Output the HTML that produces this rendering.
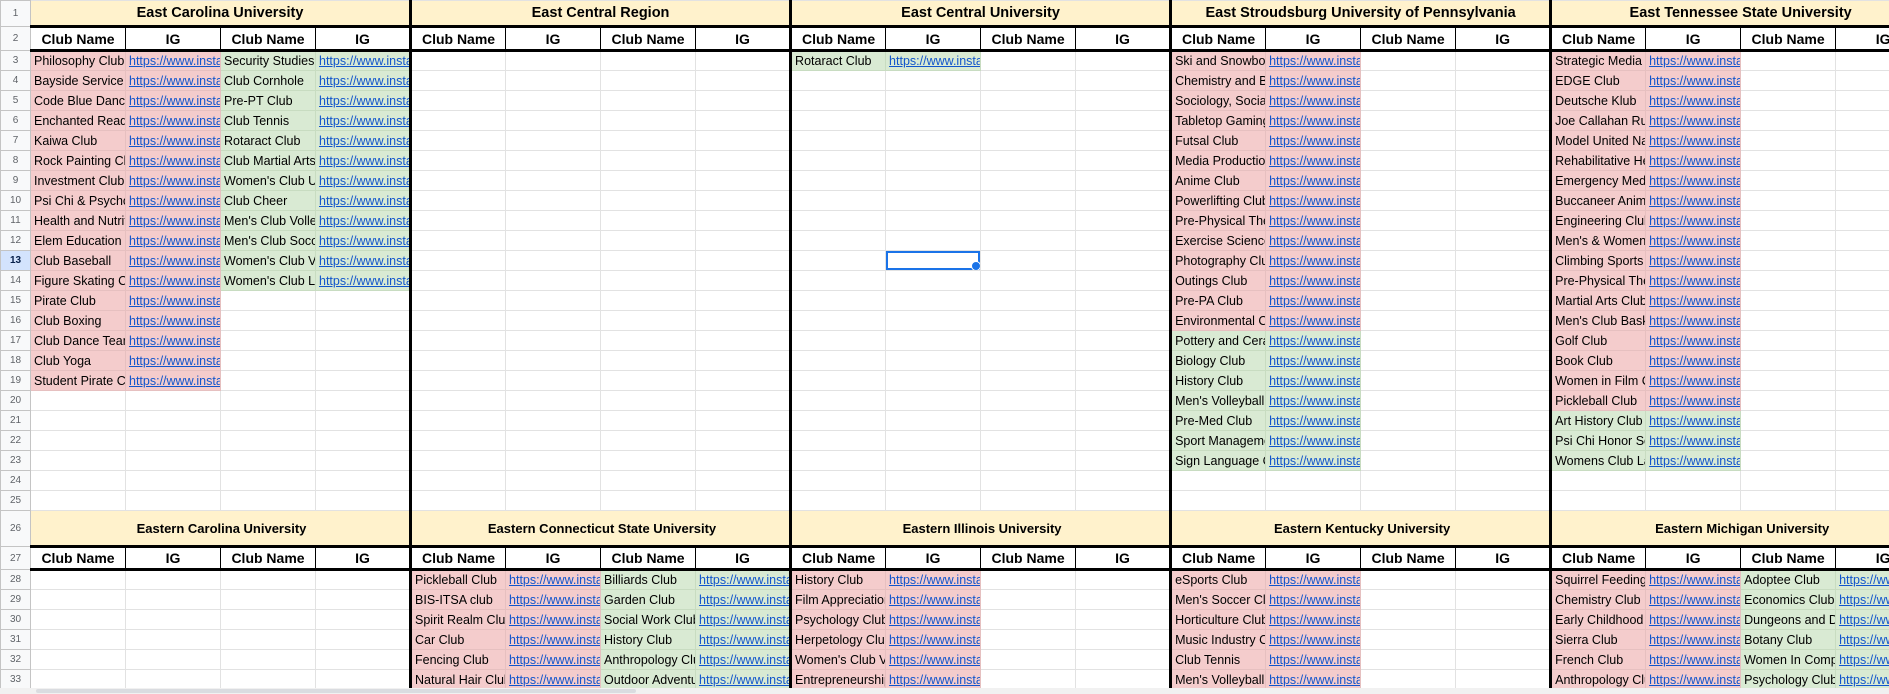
<!DOCTYPE html>
<html><head><meta charset="utf-8"><style>
html,body{margin:0;padding:0;background:#fff;width:1889px;height:694px;overflow:hidden}
table{border-collapse:collapse;table-layout:fixed;width:1930px;font-family:"Liberation Sans",Arial,sans-serif}
td{border:1px solid #e2e2e2;padding:0 0 0 3px;font-size:12.5px;white-space:nowrap;overflow:hidden;color:#000;text-overflow:clip}
th{background:#f8f9fa;color:#5f6368;font-weight:normal;font-size:10px;border:1px solid #c4c4c4;padding:0}
tr{height:20px}
td:nth-child(5),td:nth-child(9),td:nth-child(13),td:nth-child(17){border-right:3px solid #000}
.p{background:#f4cccc;border-color:#e6c0c0}
.g{background:#d9ead3;border-color:#c8dcc1}
.pl{background:#f4cccc;border-color:#e6c0c0;color:#1155cc;text-decoration:underline}
.gl{background:#d9ead3;border-color:#c8dcc1;color:#1155cc;text-decoration:underline}
tr.h1 td{background:#fff2cc;font-weight:bold;font-size:14.5px;text-align:center;border-bottom:3px solid #000;border-right:3px solid #000;vertical-align:middle;padding:0}
tr.h26 td{background:#fff2cc;font-weight:bold;font-size:13px;text-align:center;border-bottom:3px solid #000;border-right:3px solid #000;border-top:1px solid #e2e2e2}
tr.h2 td{font-weight:bold;font-size:14px;text-align:center;border-bottom:3px solid #000;border-right:1px solid #000;padding:0}
tr.h2 td:nth-child(5),tr.h2 td:nth-child(9),tr.h2 td:nth-child(13),tr.h2 td:nth-child(17){border-right:3px solid #000}
.sel{position:relative;box-shadow:inset 0 0 0 2px #1a73e8}
.dot{position:absolute;right:-1px;bottom:-1px;width:8px;height:8px;border-radius:50%;background:#1a73e8;border:1px solid #fff}
th.s{background:#d3e3fd;color:#041e49;font-weight:bold}
.sb{position:absolute;left:0;top:688px;width:1889px;height:6px;background:#f1f1f1}
.sb div{position:absolute;left:36px;top:1px;width:600px;height:4px;background:#dadce0;border-radius:2px}
</style></head><body>
<table>
<colgroup><col style="width:30px"><col span="20" style="width:95px"></colgroup>
<tr class="h1" style="height:26px"><th>1</th><td colspan="4">East Carolina University</td><td colspan="4">East Central Region</td><td colspan="4">East Central University</td><td colspan="4">East Stroudsburg University of Pennsylvania</td><td colspan="4">East Tennessee State University</td></tr>
<tr class="h2" style="height:24px"><th>2</th><td>Club Name</td><td>IG</td><td>Club Name</td><td>IG</td><td>Club Name</td><td>IG</td><td>Club Name</td><td>IG</td><td>Club Name</td><td>IG</td><td>Club Name</td><td>IG</td><td>Club Name</td><td>IG</td><td>Club Name</td><td>IG</td><td>Club Name</td><td>IG</td><td>Club Name</td><td>IG</td></tr>
<tr><th>3</th><td class="p">Philosophy Club</td><td class="pl">https://www.instagram.com/</td><td class="g">Security Studies</td><td class="gl">https://www.instagram.com/</td><td></td><td></td><td></td><td></td><td class="g">Rotaract Club</td><td class="gl">https://www.instagram.com/</td><td></td><td></td><td class="p">Ski and Snowboard</td><td class="pl">https://www.instagram.com/</td><td></td><td></td><td class="p">Strategic Media Club</td><td class="pl">https://www.instagram.com/</td><td></td><td></td></tr>
<tr><th>4</th><td class="p">Bayside Service</td><td class="pl">https://www.instagram.com/</td><td class="g">Club Cornhole</td><td class="gl">https://www.instagram.com/</td><td></td><td></td><td></td><td></td><td></td><td></td><td></td><td></td><td class="p">Chemistry and Biochem</td><td class="pl">https://www.instagram.com/</td><td></td><td></td><td class="p">EDGE Club</td><td class="pl">https://www.instagram.com/</td><td></td><td></td></tr>
<tr><th>5</th><td class="p">Code Blue Dance</td><td class="pl">https://www.instagram.com/</td><td class="g">Pre-PT Club</td><td class="gl">https://www.instagram.com/</td><td></td><td></td><td></td><td></td><td></td><td></td><td></td><td></td><td class="p">Sociology, Social Work</td><td class="pl">https://www.instagram.com/</td><td></td><td></td><td class="p">Deutsche Klub</td><td class="pl">https://www.instagram.com/</td><td></td><td></td></tr>
<tr><th>6</th><td class="p">Enchanted Reading</td><td class="pl">https://www.instagram.com/</td><td class="g">Club Tennis</td><td class="gl">https://www.instagram.com/</td><td></td><td></td><td></td><td></td><td></td><td></td><td></td><td></td><td class="p">Tabletop Gaming</td><td class="pl">https://www.instagram.com/</td><td></td><td></td><td class="p">Joe Callahan Running</td><td class="pl">https://www.instagram.com/</td><td></td><td></td></tr>
<tr><th>7</th><td class="p">Kaiwa Club</td><td class="pl">https://www.instagram.com/</td><td class="g">Rotaract Club</td><td class="gl">https://www.instagram.com/</td><td></td><td></td><td></td><td></td><td></td><td></td><td></td><td></td><td class="p">Futsal Club</td><td class="pl">https://www.instagram.com/</td><td></td><td></td><td class="p">Model United Nations</td><td class="pl">https://www.instagram.com/</td><td></td><td></td></tr>
<tr><th>8</th><td class="p">Rock Painting Club</td><td class="pl">https://www.instagram.com/</td><td class="g">Club Martial Arts</td><td class="gl">https://www.instagram.com/</td><td></td><td></td><td></td><td></td><td></td><td></td><td></td><td></td><td class="p">Media Production</td><td class="pl">https://www.instagram.com/</td><td></td><td></td><td class="p">Rehabilitative Health</td><td class="pl">https://www.instagram.com/</td><td></td><td></td></tr>
<tr><th>9</th><td class="p">Investment Club</td><td class="pl">https://www.instagram.com/</td><td class="g">Women's Club Ultimate</td><td class="gl">https://www.instagram.com/</td><td></td><td></td><td></td><td></td><td></td><td></td><td></td><td></td><td class="p">Anime Club</td><td class="pl">https://www.instagram.com/</td><td></td><td></td><td class="p">Emergency Medicine</td><td class="pl">https://www.instagram.com/</td><td></td><td></td></tr>
<tr><th>10</th><td class="p">Psi Chi &amp; Psychology</td><td class="pl">https://www.instagram.com/</td><td class="g">Club Cheer</td><td class="gl">https://www.instagram.com/</td><td></td><td></td><td></td><td></td><td></td><td></td><td></td><td></td><td class="p">Powerlifting Club</td><td class="pl">https://www.instagram.com/</td><td></td><td></td><td class="p">Buccaneer Anime</td><td class="pl">https://www.instagram.com/</td><td></td><td></td></tr>
<tr><th>11</th><td class="p">Health and Nutrition</td><td class="pl">https://www.instagram.com/</td><td class="g">Men's Club Volleyball</td><td class="gl">https://www.instagram.com/</td><td></td><td></td><td></td><td></td><td></td><td></td><td></td><td></td><td class="p">Pre-Physical Therapy</td><td class="pl">https://www.instagram.com/</td><td></td><td></td><td class="p">Engineering Club</td><td class="pl">https://www.instagram.com/</td><td></td><td></td></tr>
<tr><th>12</th><td class="p">Elem Education</td><td class="pl">https://www.instagram.com/</td><td class="g">Men's Club Soccer</td><td class="gl">https://www.instagram.com/</td><td></td><td></td><td></td><td></td><td></td><td></td><td></td><td></td><td class="p">Exercise Science</td><td class="pl">https://www.instagram.com/</td><td></td><td></td><td class="p">Men's &amp; Women's</td><td class="pl">https://www.instagram.com/</td><td></td><td></td></tr>
<tr><th class="s">13</th><td class="p">Club Baseball</td><td class="pl">https://www.instagram.com/</td><td class="g">Women's Club Volleyball</td><td class="gl">https://www.instagram.com/</td><td></td><td></td><td></td><td></td><td></td><td class="sel"><span class="dot"></span></td><td></td><td></td><td class="p">Photography Club</td><td class="pl">https://www.instagram.com/</td><td></td><td></td><td class="p">Climbing Sports</td><td class="pl">https://www.instagram.com/</td><td></td><td></td></tr>
<tr><th>14</th><td class="p">Figure Skating Club</td><td class="pl">https://www.instagram.com/</td><td class="g">Women's Club Lacrosse</td><td class="gl">https://www.instagram.com/</td><td></td><td></td><td></td><td></td><td></td><td></td><td></td><td></td><td class="p">Outings Club</td><td class="pl">https://www.instagram.com/</td><td></td><td></td><td class="p">Pre-Physical Therapy</td><td class="pl">https://www.instagram.com/</td><td></td><td></td></tr>
<tr><th>15</th><td class="p">Pirate Club</td><td class="pl">https://www.instagram.com/</td><td></td><td></td><td></td><td></td><td></td><td></td><td></td><td></td><td></td><td></td><td class="p">Pre-PA Club</td><td class="pl">https://www.instagram.com/</td><td></td><td></td><td class="p">Martial Arts Club</td><td class="pl">https://www.instagram.com/</td><td></td><td></td></tr>
<tr><th>16</th><td class="p">Club Boxing</td><td class="pl">https://www.instagram.com/</td><td></td><td></td><td></td><td></td><td></td><td></td><td></td><td></td><td></td><td></td><td class="p">Environmental Club</td><td class="pl">https://www.instagram.com/</td><td></td><td></td><td class="p">Men's Club Basketball</td><td class="pl">https://www.instagram.com/</td><td></td><td></td></tr>
<tr><th>17</th><td class="p">Club Dance Team</td><td class="pl">https://www.instagram.com/</td><td></td><td></td><td></td><td></td><td></td><td></td><td></td><td></td><td></td><td></td><td class="g">Pottery and Ceramics</td><td class="gl">https://www.instagram.com/</td><td></td><td></td><td class="p">Golf Club</td><td class="pl">https://www.instagram.com/</td><td></td><td></td></tr>
<tr><th>18</th><td class="p">Club Yoga</td><td class="pl">https://www.instagram.com/</td><td></td><td></td><td></td><td></td><td></td><td></td><td></td><td></td><td></td><td></td><td class="g">Biology Club</td><td class="gl">https://www.instagram.com/</td><td></td><td></td><td class="p">Book Club</td><td class="pl">https://www.instagram.com/</td><td></td><td></td></tr>
<tr><th>19</th><td class="p">Student Pirate Club</td><td class="pl">https://www.instagram.com/</td><td></td><td></td><td></td><td></td><td></td><td></td><td></td><td></td><td></td><td></td><td class="g">History Club</td><td class="gl">https://www.instagram.com/</td><td></td><td></td><td class="p">Women in Film Club</td><td class="pl">https://www.instagram.com/</td><td></td><td></td></tr>
<tr><th>20</th><td></td><td></td><td></td><td></td><td></td><td></td><td></td><td></td><td></td><td></td><td></td><td></td><td class="g">Men's Volleyball</td><td class="gl">https://www.instagram.com/</td><td></td><td></td><td class="p">Pickleball Club</td><td class="pl">https://www.instagram.com/</td><td></td><td></td></tr>
<tr><th>21</th><td></td><td></td><td></td><td></td><td></td><td></td><td></td><td></td><td></td><td></td><td></td><td></td><td class="g">Pre-Med Club</td><td class="gl">https://www.instagram.com/</td><td></td><td></td><td class="g">Art History Club</td><td class="gl">https://www.instagram.com/</td><td></td><td></td></tr>
<tr><th>22</th><td></td><td></td><td></td><td></td><td></td><td></td><td></td><td></td><td></td><td></td><td></td><td></td><td class="g">Sport Management</td><td class="gl">https://www.instagram.com/</td><td></td><td></td><td class="g">Psi Chi Honor Society</td><td class="gl">https://www.instagram.com/</td><td></td><td></td></tr>
<tr><th>23</th><td></td><td></td><td></td><td></td><td></td><td></td><td></td><td></td><td></td><td></td><td></td><td></td><td class="g">Sign Language Club</td><td class="gl">https://www.instagram.com/</td><td></td><td></td><td class="g">Womens Club Lacrosse</td><td class="gl">https://www.instagram.com/</td><td></td><td></td></tr>
<tr><th>24</th><td></td><td></td><td></td><td></td><td></td><td></td><td></td><td></td><td></td><td></td><td></td><td></td><td></td><td></td><td></td><td></td><td></td><td></td><td></td><td></td></tr>
<tr><th>25</th><td></td><td></td><td></td><td></td><td></td><td></td><td></td><td></td><td></td><td></td><td></td><td></td><td></td><td></td><td></td><td></td><td></td><td></td><td></td><td></td></tr>
<tr class="h26" style="height:36px"><th>26</th><td colspan="4">Eastern Carolina University</td><td colspan="4">Eastern Connecticut State University</td><td colspan="4">Eastern Illinois University</td><td colspan="4">Eastern Kentucky University</td><td colspan="4">Eastern Michigan University</td></tr>
<tr class="h2" style="height:23px"><th>27</th><td>Club Name</td><td>IG</td><td>Club Name</td><td>IG</td><td>Club Name</td><td>IG</td><td>Club Name</td><td>IG</td><td>Club Name</td><td>IG</td><td>Club Name</td><td>IG</td><td>Club Name</td><td>IG</td><td>Club Name</td><td>IG</td><td>Club Name</td><td>IG</td><td>Club Name</td><td>IG</td></tr>
<tr><th>28</th><td></td><td></td><td></td><td></td><td class="p">Pickleball Club</td><td class="pl">https://www.instagram.com/</td><td class="g">Billiards Club</td><td class="gl">https://www.instagram.com/</td><td class="p">History Club</td><td class="pl">https://www.instagram.com/</td><td></td><td></td><td class="p">eSports Club</td><td class="pl">https://www.instagram.com/</td><td></td><td></td><td class="p">Squirrel Feeding</td><td class="pl">https://www.instagram.com/</td><td class="g">Adoptee Club</td><td class="gl">https://www.instagram.com/</td></tr>
<tr><th>29</th><td></td><td></td><td></td><td></td><td class="p">BIS-ITSA club</td><td class="pl">https://www.instagram.com/</td><td class="g">Garden Club</td><td class="gl">https://www.instagram.com/</td><td class="p">Film Appreciation</td><td class="pl">https://www.instagram.com/</td><td></td><td></td><td class="p">Men's Soccer Club</td><td class="pl">https://www.instagram.com/</td><td></td><td></td><td class="p">Chemistry Club</td><td class="pl">https://www.instagram.com/</td><td class="g">Economics Club</td><td class="gl">https://www.instagram.com/</td></tr>
<tr><th>30</th><td></td><td></td><td></td><td></td><td class="p">Spirit Realm Club</td><td class="pl">https://www.instagram.com/</td><td class="g">Social Work Club</td><td class="gl">https://www.instagram.com/</td><td class="p">Psychology Club</td><td class="pl">https://www.instagram.com/</td><td></td><td></td><td class="p">Horticulture Club</td><td class="pl">https://www.instagram.com/</td><td></td><td></td><td class="p">Early Childhood</td><td class="pl">https://www.instagram.com/</td><td class="g">Dungeons and Dragons</td><td class="gl">https://www.instagram.com/</td></tr>
<tr><th>31</th><td></td><td></td><td></td><td></td><td class="p">Car Club</td><td class="pl">https://www.instagram.com/</td><td class="g">History Club</td><td class="gl">https://www.instagram.com/</td><td class="p">Herpetology Club</td><td class="pl">https://www.instagram.com/</td><td></td><td></td><td class="p">Music Industry Club</td><td class="pl">https://www.instagram.com/</td><td></td><td></td><td class="p">Sierra Club</td><td class="pl">https://www.instagram.com/</td><td class="g">Botany Club</td><td class="gl">https://www.instagram.com/</td></tr>
<tr><th>32</th><td></td><td></td><td></td><td></td><td class="p">Fencing Club</td><td class="pl">https://www.instagram.com/</td><td class="g">Anthropology Club</td><td class="gl">https://www.instagram.com/</td><td class="p">Women's Club Volleyball</td><td class="pl">https://www.instagram.com/</td><td></td><td></td><td class="p">Club Tennis</td><td class="pl">https://www.instagram.com/</td><td></td><td></td><td class="p">French Club</td><td class="pl">https://www.instagram.com/</td><td class="g">Women In Computing</td><td class="gl">https://www.instagram.com/</td></tr>
<tr><th>33</th><td></td><td></td><td></td><td></td><td class="p">Natural Hair Club</td><td class="pl">https://www.instagram.com/</td><td class="g">Outdoor Adventure</td><td class="gl">https://www.instagram.com/</td><td class="p">Entrepreneurship</td><td class="pl">https://www.instagram.com/</td><td></td><td></td><td class="p">Men's Volleyball</td><td class="pl">https://www.instagram.com/</td><td></td><td></td><td class="p">Anthropology Club</td><td class="pl">https://www.instagram.com/</td><td class="g">Psychology Club</td><td class="gl">https://www.instagram.com/</td></tr>
</table>
<div class="sb"><div></div></div>
</body></html>
